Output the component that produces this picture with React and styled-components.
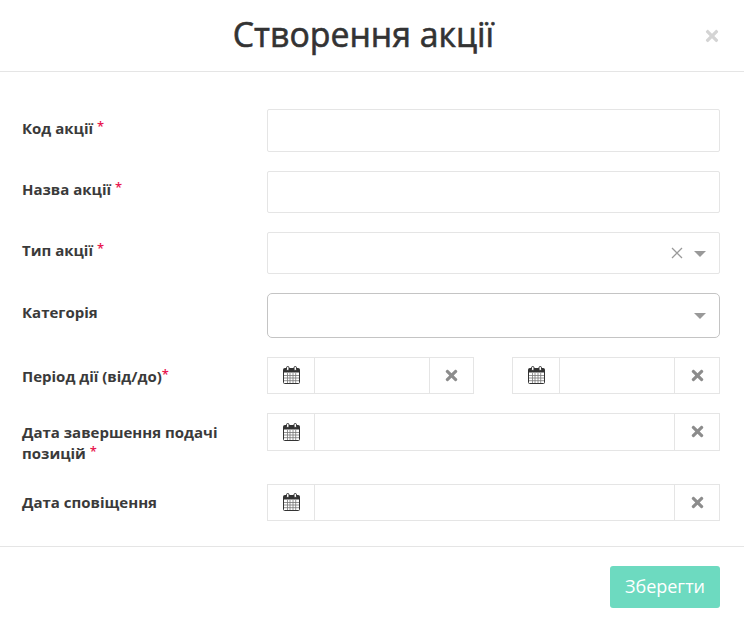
import React from "react";
import styled, { createGlobalStyle } from "styled-components";
import { FaTimes } from "react-icons/fa";

const GlobalStyle = createGlobalStyle`
  html, body {
    margin: 0;
    padding: 0;
    background: #fff;
    font-family: "Open Sans", "Liberation Sans", sans-serif;
    color: #333;
  }
  * {
    box-sizing: border-box;
  }
`;

const Modal = styled.div`
  width: 744px;
  height: 627px;
  overflow: hidden;
  background: #fff;
`;

const Header = styled.header`
  position: relative;
  height: 72px;
  padding-right: 17px;
  border-bottom: 1px solid #e5e5e5;
  display: flex;
  align-items: center;
  justify-content: center;
`;

const Title = styled.h1`
  margin: 0 0 4px;
  font-size: 33.8px;
  line-height: 40px;
  font-weight: 400;
  -webkit-text-stroke: 0.6px #333;
  color: #333;
`;

const CloseButton = styled.span`
  position: absolute;
  right: 23px;
  top: 27px;
  display: flex;
  color: #d4d4d4;
  font-size: 18px;
`;

const Form = styled.form`
  height: 474px;
  padding: 37px 24px 0 22px;
  display: flex;
  flex-direction: column;
`;

const Row = styled.div`
  display: grid;
  grid-template-columns: 245px 453px;
  margin-bottom: ${(p) => p.$gap}px;
`;

const Label = styled.label`
  font-size: 15px;
  line-height: 21px;
  font-weight: 700;
  color: #3a3a3a;
  padding-top: ${(p) => p.$top}px;
  width: 210px;
`;

const Star = styled.sup`
  color: #e8174f;
  font-size: 13px;
  line-height: 0;
  font-weight: 600;
  vertical-align: 3px;
`;

const TextInput = styled.input`
  display: block;
  width: 100%;
  height: ${(p) => p.$h}px;
  border: 1px solid #e5e5e5;
  border-radius: 2px;
  background: #fff;
  outline: none;
`;

const Select = styled.div`
  height: ${(p) => p.$h}px;
  border: 1px solid ${(p) => (p.$strong ? "#c4c4c4" : "#e5e5e5")};
  border-radius: ${(p) => (p.$strong ? 5 : 2)}px;
  display: flex;
  align-items: center;
  justify-content: flex-end;
  padding-right: 13px;
  gap: 11px;
`;

const Clear = styled.span`
  color: #999;
  display: flex;
`;

const Caret = styled.span`
  width: 0;
  height: 0;
  border-left: 6.5px solid transparent;
  border-right: 6.5px solid transparent;
  border-top: 6px solid #999;
  margin-top: 1px;
`;

const DatePair = styled.div`
  display: grid;
  grid-template-columns: 207px 208px;
  justify-content: space-between;
`;

const DateBox = styled.div`
  height: ${(p) => p.$h}px;
  display: grid;
  grid-template-columns: 46px 1fr ${(p) => (p.$narrow ? 43 : 44)}px;
  border: 1px solid #e5e5e5;
`;

const DateAddon = styled.span`
  display: flex;
  align-items: center;
  justify-content: center;
  color: #8c8c8c;
  font-size: 17px;
  padding-bottom: 1px;
`;

const DateField = styled.div`
  border-left: 1px solid #e5e5e5;
  border-right: 1px solid #e5e5e5;
`;

const Footer = styled.footer`
  border-top: 1px solid #e5e5e5;
  display: flex;
  justify-content: flex-end;
  padding: 19px 24px 0 0;
`;

const SaveButton = styled.button`
  width: 110px;
  height: 42px;
  border: 0;
  border-radius: 3px;
  background: #6ddac0;
  color: #fff;
  font-family: inherit;
  font-size: 18px;
  font-weight: 400;
  padding: 0 0 2px;
`;

const CalendarIcon = () => (
  <svg width="17" height="18" viewBox="0 0 17 18">
    <rect x="0.5" y="2.5" width="16" height="15" rx="1" fill="#fff" stroke="#333" />
    <path d="M0.5 3.5a1 1 0 0 1 1-1h14a1 1 0 0 1 1 1v3h-16z" fill="#333" />
    <path
      d="M1 9.5h15M1 12h15M1 14.7h15M4.5 7v10M7 7v10M10 7v10M12.7 7v10"
      fill="none"
      stroke="#777"
      strokeWidth="0.8"
    />
    <rect x="3.5" y="0.5" width="2.5" height="4" rx="1.2" fill="#fff" stroke="#333" />
    <rect x="11" y="0.5" width="2.5" height="4" rx="1.2" fill="#fff" stroke="#333" />
  </svg>
);

const DateInput = ({ h, narrow }) => (
  <DateBox $h={h} $narrow={narrow}>
    <DateAddon>
      <CalendarIcon />
    </DateAddon>
    <DateField />
    <DateAddon>
      <FaTimes />
    </DateAddon>
  </DateBox>
);

const App = () => (
  <Modal>
    <GlobalStyle />
    <Header>
      <Title>Створення акції</Title>
      <CloseButton>
        <FaTimes />
      </CloseButton>
    </Header>
    <Form>
      <Row $gap={19}>
        <Label $top={9}>
          Код акції <Star>*</Star>
        </Label>
        <TextInput $h={43} />
      </Row>
      <Row $gap={19}>
        <Label $top={8}>
          Назва акції <Star>*</Star>
        </Label>
        <TextInput $h={42} />
      </Row>
      <Row $gap={19}>
        <Label $top={8}>
          Тип акції <Star>*</Star>
        </Label>
        <Select $h={42}>
          <Clear>
            <svg width="12" height="12" viewBox="0 0 12 12">
              <path d="M1 1l10 10M11 1L1 11" stroke="#999" strokeWidth="1.3" fill="none" />
            </svg>
          </Clear>
          <Caret />
        </Select>
      </Row>
      <Row $gap={19}>
        <Label $top={9}>Категорія</Label>
        <Select $h={45} $strong>
          <Caret />
        </Select>
      </Row>
      <Row $gap={19}>
        <Label $top={9}>
          Період дії (від/до)<Star>*</Star>
        </Label>
        <DatePair>
          <DateInput h={37} narrow />
          <DateInput h={37} />
        </DatePair>
      </Row>
      <Row $gap={20}>
        <Label $top={9}>
          Дата завершення подачі позицій <Star>*</Star>
        </Label>
        <DateInput h={38} />
      </Row>
      <Row $gap={0}>
        <Label $top={8}>Дата сповіщення</Label>
        <DateInput h={37} />
      </Row>
    </Form>
    <Footer>
      <SaveButton type="button">Зберегти</SaveButton>
    </Footer>
  </Modal>
);

export default App;
